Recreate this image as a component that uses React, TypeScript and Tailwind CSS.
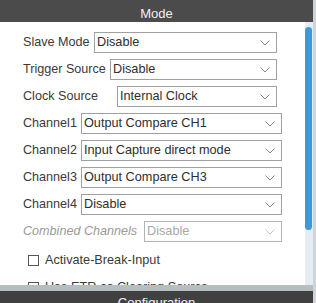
import type React from "react"

type Row = {
  label: string
  value: string
  labelW: string
  selectW: string
  disabled?: boolean
}

const rows: Row[] = [
  { label: "Slave Mode", value: "Disable", labelW: "w-[71px]", selectW: "w-[183px]" },
  { label: "Trigger Source", value: "Disable", labelW: "w-[87px]", selectW: "w-[167px]" },
  { label: "Clock Source", value: "Internal Clock", labelW: "w-[94px]", selectW: "w-[160px]" },
  { label: "Channel1", value: "Output Compare CH1", labelW: "w-[58px]", selectW: "w-[201px]" },
  { label: "Channel2", value: "Input Capture direct mode", labelW: "w-[58px]", selectW: "w-[201px]" },
  { label: "Channel3", value: "Output Compare CH3", labelW: "w-[58px]", selectW: "w-[201px]" },
  { label: "Channel4", value: "Disable", labelW: "w-[58px]", selectW: "w-[201px]" },
  { label: "Combined Channels", value: "Disable", labelW: "w-[121px]", selectW: "w-[138px]", disabled: true },
]

const Chevron: React.FC<{ light?: boolean }> = ({ light }) => (
  <svg width="10" height="6" viewBox="0 0 10 6" className="shrink-0">
    <polyline
      points="0.5,0.5 5,5 9.5,0.5"
      fill="none"
      stroke={light ? "#c4c4c4" : "#8a8a8a"}
      strokeWidth="1"
    />
  </svg>
)

const Checkbox: React.FC<{ label: string }> = ({ label }) => (
  <div className="flex items-center h-[17px] pl-[28px] gap-[6px] shrink-0">
    <span className="w-[11px] h-[11px] border border-[#555] bg-white shrink-0" />
    <span className="text-[12.7px] text-[#3a3a3a] whitespace-nowrap">{label}</span>
  </div>
)

export default function App() {
  return (
    <div
      className="flex w-[316px] h-[303px] overflow-hidden bg-white"
      style={{ fontFamily: '"Liberation Sans", Arial, sans-serif' }}
    >
      <div className="flex flex-col w-[313px] h-full">
        {/* Header */}
        <div className="h-[22px] shrink-0 bg-[#4b4b4b] text-[#f0f0f0] text-[13px] text-center pt-[5px] leading-[17px]">
          Mode
        </div>

        {/* Body */}
        <div className="flex h-[263px] shrink-0 overflow-hidden">
          <div className="flex flex-col w-[305px] pt-[10px] gap-[6px] overflow-hidden">
            {rows.map((r) => (
              <div key={r.label} className="flex items-center h-[21px] pl-[23px] shrink-0">
                <span
                  className={`${r.labelW} shrink-0 whitespace-nowrap text-[12.6px] ${
                    r.disabled ? "italic text-[#9a9a9a]" : "text-[#3a3a3a]"
                  }`}
                >
                  {r.label}
                </span>
                <div
                  className={`${r.selectW} h-[21px] flex items-center justify-between pl-[2px] pr-[6px] border ${
                    r.disabled ? "border-[#b4b4b4] text-[#a8a8a8]" : "border-[#a0a0a0] text-[#2e2e2e]"
                  } bg-white text-[12.7px] whitespace-nowrap`}
                >
                  <span>{r.value}</span>
                  <Chevron light={r.disabled} />
                </div>
              </div>
            ))}
            <div className="flex flex-col gap-[10px] pt-[4px]">
              <Checkbox label="Activate-Break-Input" />
              <Checkbox label="Use ETR as Clearing Source" />
            </div>
          </div>

          {/* Scrollbar */}
          <div className="w-[8px] h-full bg-[#e4edf5] pt-[5px]">
            <div className="h-[203px] w-[7px] rounded-full bg-[#3d9ad6]" />
          </div>
        </div>

        {/* Footer */}
        <div className="h-[6px] shrink-0 bg-[#b6bec2]" />
        <div className="flex-1 bg-[#404040] text-[#f0f0f0] text-[13px] text-center pt-[3px] leading-[17px] overflow-hidden">
          Configuration
        </div>
      </div>
      <div className="w-[3px] h-full bg-[#d0d4d7]" />
    </div>
  )
}
